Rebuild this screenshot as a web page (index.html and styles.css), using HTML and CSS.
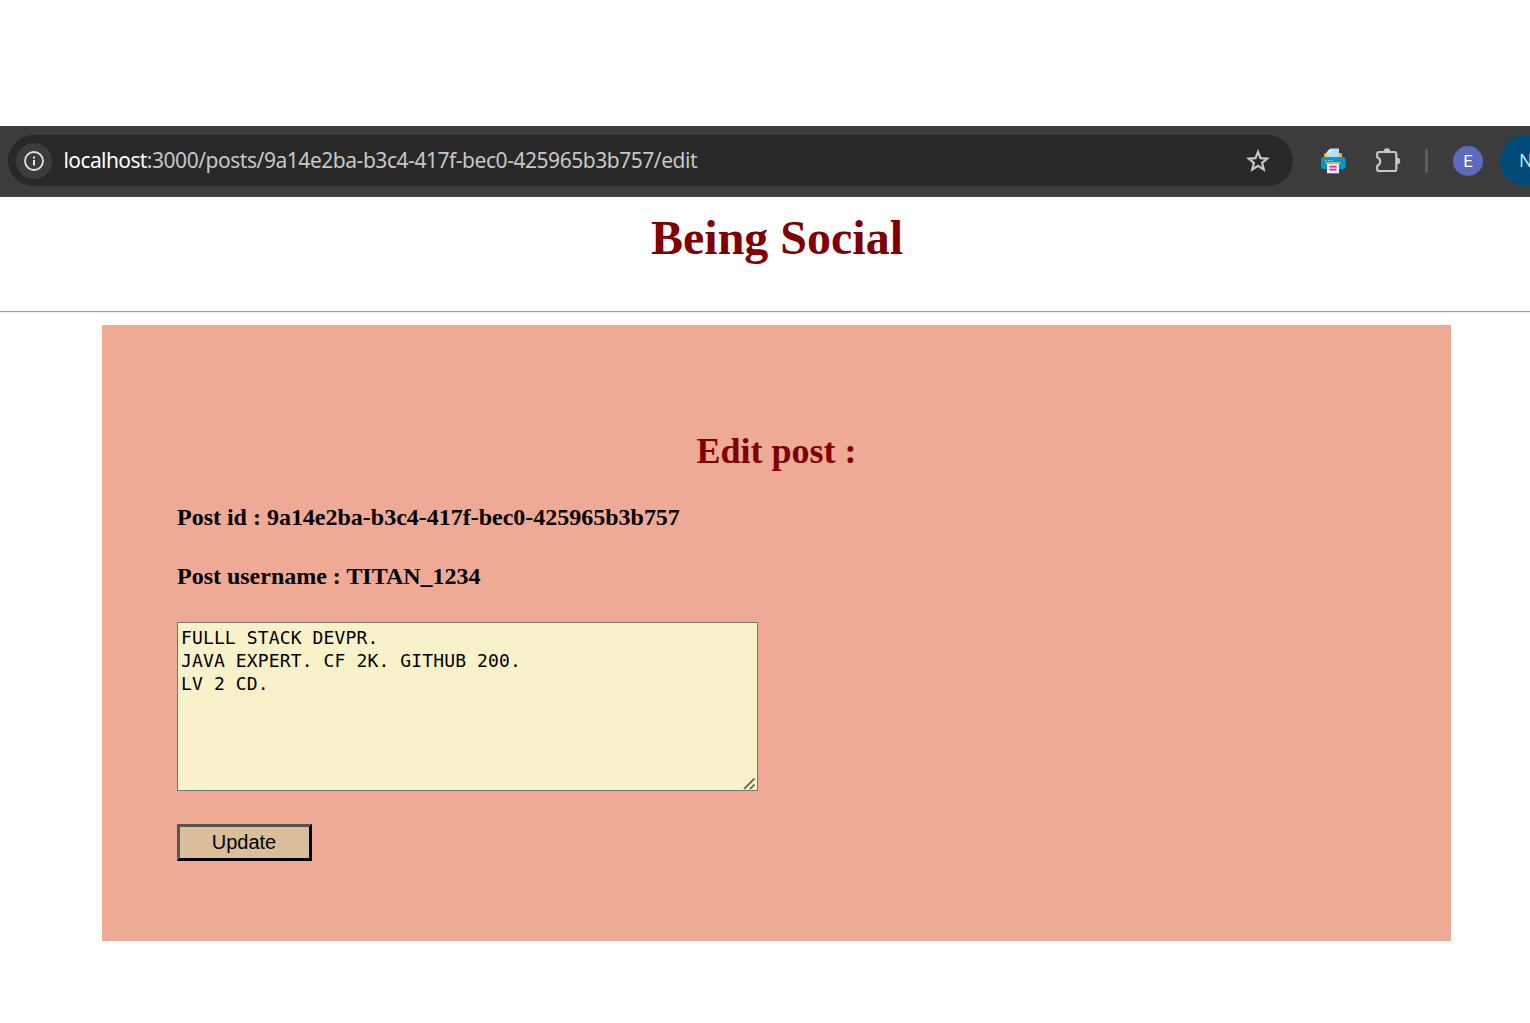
FILE: index.html
```html
<!DOCTYPE html>
<html lang="en">
<head>
<meta charset="utf-8">
<title>Being Social</title>
<link rel="stylesheet" href="styles.css">
</head>
<body>
<div class="toolbar">
  <div class="address">
    <span class="info">
      <svg width="20" height="20" viewBox="0 0 20 20"><circle cx="10" cy="10" r="9" fill="none" stroke="#e3e3e3" stroke-width="1.8"/><path d="M10 9v5.600M10 5.400v2" stroke="#e3e3e3" stroke-width="2"/></svg>
    </span>
    <span class="url"><span class="host">localhost</span>:3000/posts/9a14e2ba-b3c4-417f-bec0-425965b3b757/edit</span>
    <svg class="star" width="24" height="24" viewBox="0 0 24 24"><path d="M12 2.800l2.500 6.300 6.800.5-5.200 4.300 1.700 6.700-5.800-3.700-5.800 3.700 1.700-6.700-5.200-4.300 6.800-.5z" fill="none" stroke="#c7c7c7" stroke-width="2.200"/></svg>
  </div>
  <svg class="printer" width="26" height="26" viewBox="0 0 26 26">
    <path d="M4 10V6.500Q4 5 5.500 5h15Q22 5 22 6.500V10z" fill="#ffb900"/>
    <path d="M6.500 10V4.500L10.500 .5H19V10z" fill="#b8def5"/><path d="M6.500 4.500h4v-4z" fill="#e8f7ff"/>
    <rect x="1" y="9" width="24.500" height="12" rx="2.500" fill="#0795cf"/>
    <path d="M5 12.500h1.500M8 12.500h1.500M11 12.500h1.500" stroke="#8be5ff" stroke-width="1.200"/>
    <path d="M5.500 15h15" stroke="#ffc928" stroke-width="1.500"/>
    <path d="M7 16h12v9.300H7z" fill="#e3f3fc"/><path d="M9.500 18.600h7M9.500 21.600h7" stroke="#f01faa" stroke-width="1.800"/>
  </svg>
  <svg class="puzzle" width="28" height="28" viewBox="0 0 28 28"><path d="M5 5h15.500q1.800 0 1.800 1.800v15.400q0 1.800-1.800 1.800H5q-1.800 0-1.800-1.800v-3.400c2-.8 3-2.300 3-4.300s-1-3.500-3-4.300V6.800Q3.200 5 5 5z" fill="none" stroke="#c7c7c7" stroke-width="2.200" stroke-linejoin="round"/><path d="M9.800 4.500a3.200 3.200 0 0 1 6.400 0zM23 10.800a3.200 3.200 0 0 1 0 6.400z" fill="#c7c7c7"/></svg>
  <span class="divider"></span>
  <span class="avatar">E</span>
  <span class="chip">N</span>
</div>
<div class="page">
  <h1 class="title">Being Social</h1>
  <hr class="rule">
  <form class="card">
    <h2 class="heading">Edit post :</h2>
    <h4 class="field">Post id : 9a14e2ba-b3c4-417f-bec0-425965b3b757</h4>
    <h4 class="field">Post username : TITAN_1234</h4>
    <div class="editor">
      <div class="content">FULLL STACK DEVPR.
JAVA EXPERT. CF 2K. GITHUB 200.
LV 2 CD.</div>
      <svg class="grip" width="13" height="13" viewBox="0 0 13 13"><path d="M1 12L11.500 1.500M7 12l4.500-4.500" stroke="#505050" stroke-width="1.600"/></svg>
    </div>
    <button class="update" type="button">Update</button>
  </form>
</div>
</body>
</html>
```
FILE: styles.css
```css
* { box-sizing: border-box; }
body {
  margin: 0;
  padding-top: 126px;
  height: 1023px;
  overflow: hidden;
  background: #fff;
  font-family: "Liberation Serif", "Times New Roman", serif;
}
.toolbar {
  display: flex;
  align-items: center;
  width: 1553px;
  height: 71px;
  padding: 0 0 1px 8px;
  background: #3c3c3c;
  border-bottom: 1px solid #4a4646;
  font-family: "Noto Sans", sans-serif;
}
.address {
  display: flex;
  align-items: center;
  width: 1285px;
  height: 51px;
  padding: 0 23px 0 8px;
  border-radius: 26px;
  background: #282828;
}
.info {
  display: flex;
  align-items: center;
  justify-content: center;
  width: 36px;
  height: 36px;
  border-radius: 50%;
  background: #3c3c3c;
}
.url {
  flex: 1;
  margin-left: 11.5px;
  padding-bottom: 1px;
  font-size: 21px;
  line-height: 30px;
  letter-spacing: -0.46px;
  color: #c7c7c7;
  white-space: nowrap;
}
.host { color: #fff; letter-spacing: -0.6px; }
.printer { margin-left: 26.5px; }
.puzzle { margin-left: 28.5px; }
.divider { width: 3px; height: 24px; margin-left: 23px; border-radius: 2px; background: #5e5e5e; }
.avatar {
  width: 30px;
  height: 30px;
  margin-left: 25px;
  border-radius: 50%;
  background: #5c6bc0;
  color: #fff;
  font: 17px/30px Roboto, sans-serif;
  text-align: center;
}
.chip {
  width: 53px;
  height: 51px;
  margin-left: 17px;
  padding-left: 19px;
  border-radius: 26px 0 0 26px;
  background: #004a77;
  color: #c2e7ff;
  font-size: 18px;
  line-height: 51px;
}
.page { width: 1553px; }
.title {
  margin: 0;
  padding: 13px 0 0 1px;
  height: 114px;
  font-size: 48px;
  line-height: 55px;
  text-align: center;
  color: #800000;
}
.rule { margin: 0; height: 2px; border: 0; border-top: 1px solid #9a9a9a; border-bottom: 1px solid #eee; }
.card {
  width: 1349px;
  height: 616px;
  margin: 12px 102px 0;
  padding: 105px 75px 0;
  background: #eeaa94;
}
.heading { margin: 0 0 32px; font-size: 36px; line-height: 42px; text-align: center; color: #800000; }
.field { margin: 0 0 32px; font-size: 24px; line-height: 27px; letter-spacing: -0.01px; }
.editor {
  position: relative;
  width: 581px;
  height: 169px;
  padding: 3px;
  border: 1px solid #767676;
  background: #f8f2cb;
}
.content { font: 18px/23px "DejaVu Sans Mono", monospace; letter-spacing: 0.13px; white-space: pre; }
.grip { position: absolute; right: 1px; bottom: 0; }
.update {
  display: block;
  width: 135px;
  height: 37px;
  margin-top: 33px;
  padding: 0 1px 0 0;
  border: 3px solid;
  border-color: #555 #000 #000 #555;
  background: #dabd9a;
  color: #000;
  font: 20px/29px "Liberation Sans", Arial, sans-serif;
}
```
